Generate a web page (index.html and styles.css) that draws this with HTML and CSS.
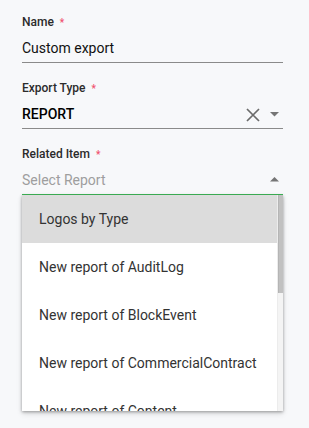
FILE: index.html
```html
<!DOCTYPE html>
<html lang="en">
<head>
  <meta charset="UTF-8">
  <title>Export</title>
  <link rel="stylesheet" href="styles.css">
</head>
<body>
  <form class="export-form">
    <!-- Name -->
    <div class="field">
      <label class="field-label">Name <span class="req">*</span></label>
      <div class="field-input">
        <span class="value">Custom export</span>
      </div>
    </div>

    <!-- Export type -->
    <div class="field">
      <label class="field-label">Export Type <span class="req">*</span></label>
      <div class="field-input">
        <span class="value strong">REPORT</span>
        <svg class="icon-clear" width="14" height="14" viewBox="0 0 14 14">
          <path d="M1 1 L13 13 M13 1 L1 13" stroke="#6b6b6b" stroke-width="1.7" fill="none"/>
        </svg>
        <svg class="icon-caret" width="9" height="5" viewBox="0 0 9 5">
          <path d="M0 0 L9 0 L4.5 4.5 Z" fill="#757575"/>
        </svg>
      </div>
    </div>

    <!-- Related item (open) -->
    <div class="field open">
      <label class="field-label">Related Item <span class="req">*</span></label>
      <div class="field-input">
        <span class="value placeholder">Select Report</span>
        <svg class="icon-caret" width="9" height="5" viewBox="0 0 9 5">
          <path d="M0 4.5 L9 4.5 L4.5 0 Z" fill="#757575"/>
        </svg>
      </div>
      <div class="menu">
        <ul class="menu-list">
          <li class="menu-item selected">Logos by Type</li>
          <li class="menu-item">New report of AuditLog</li>
          <li class="menu-item">New report of BlockEvent</li>
          <li class="menu-item">New report of CommercialContract</li>
          <li class="menu-item">New report of Content</li>
          <li class="menu-item">New report of Contract</li>
          <li class="menu-item">New report of Event</li>
          <li class="menu-item">New report of Invoice</li>
          <li class="menu-item">New report of Logo</li>
          <li class="menu-item">New report of User</li>
        </ul>
        <div class="scroll-track"><div class="scroll-thumb"></div></div>
      </div>
    </div>
  </form>
</body>
</html>
```

FILE: styles.css
```css
/* Base */
* {
  box-sizing: border-box;
}
html, body {
  height: 100%;
}
body {
  margin: 0;
  padding: 14px 26px 0 22px;
  background: #f7f8fa;
  font-family: 'Roboto', sans-serif;
  color: #222;
  overflow: hidden;
}

/* Fields */
.field {
  position: relative;
  margin-bottom: 17px;
}
.field-label {
  display: block;
  font-size: 12px;
  line-height: 16px;
  font-weight: 500;
  color: #2b2b2b;
  margin-bottom: 5px;
}
.req {
  color: #f0506e;
  font-size: 10px;
  margin-left: 3px;
}
.field-input {
  display: flex;
  align-items: center;
  height: 27px;
  padding-bottom: 2px;
  border-bottom: 1px solid #8a8a8a;
}
.value {
  flex: 1;
  font-size: 14px;
  line-height: 24px;
  color: #111;
}
.value.strong {
  font-weight: 500;
  color: #000;
}
.value.placeholder {
  color: #9e9e9e;
}
.icon-clear {
  margin: 1px 10px 0 0;
}
.icon-caret {
  margin: 1px 4px 0 0;
}
.field.open .field-input {
  border-bottom-color: #3fb85a;
}
.field.open .icon-caret {
  margin-top: -2px;
}

/* Dropdown menu */
.menu {
  position: absolute;
  left: 0;
  right: 0;
  top: 100%;
  height: 216px;
  display: flex;
  background: #fff;
  box-shadow: 0 1px 3px rgba(0, 0, 0, 0.35), 0 3px 6px rgba(0, 0, 0, 0.1);
}
.menu-list {
  flex: 1;
  margin: 0;
  padding: 0;
  list-style: none;
  overflow: hidden;
}
.menu-item {
  height: 48px;
  line-height: 48px;
  padding-left: 17px;
  font-size: 14px;
  color: #333;
  white-space: nowrap;
}
.menu-item.selected {
  background: #dcdcdc;
}
.scroll-track {
  width: 6px;
  background: #f4f4f4;
  border-left: 1px solid #ececec;
}
.scroll-thumb {
  height: 98px;
  background: #c1c1c1;
  border-left: 1px solid #b5b5b5;
}
```
